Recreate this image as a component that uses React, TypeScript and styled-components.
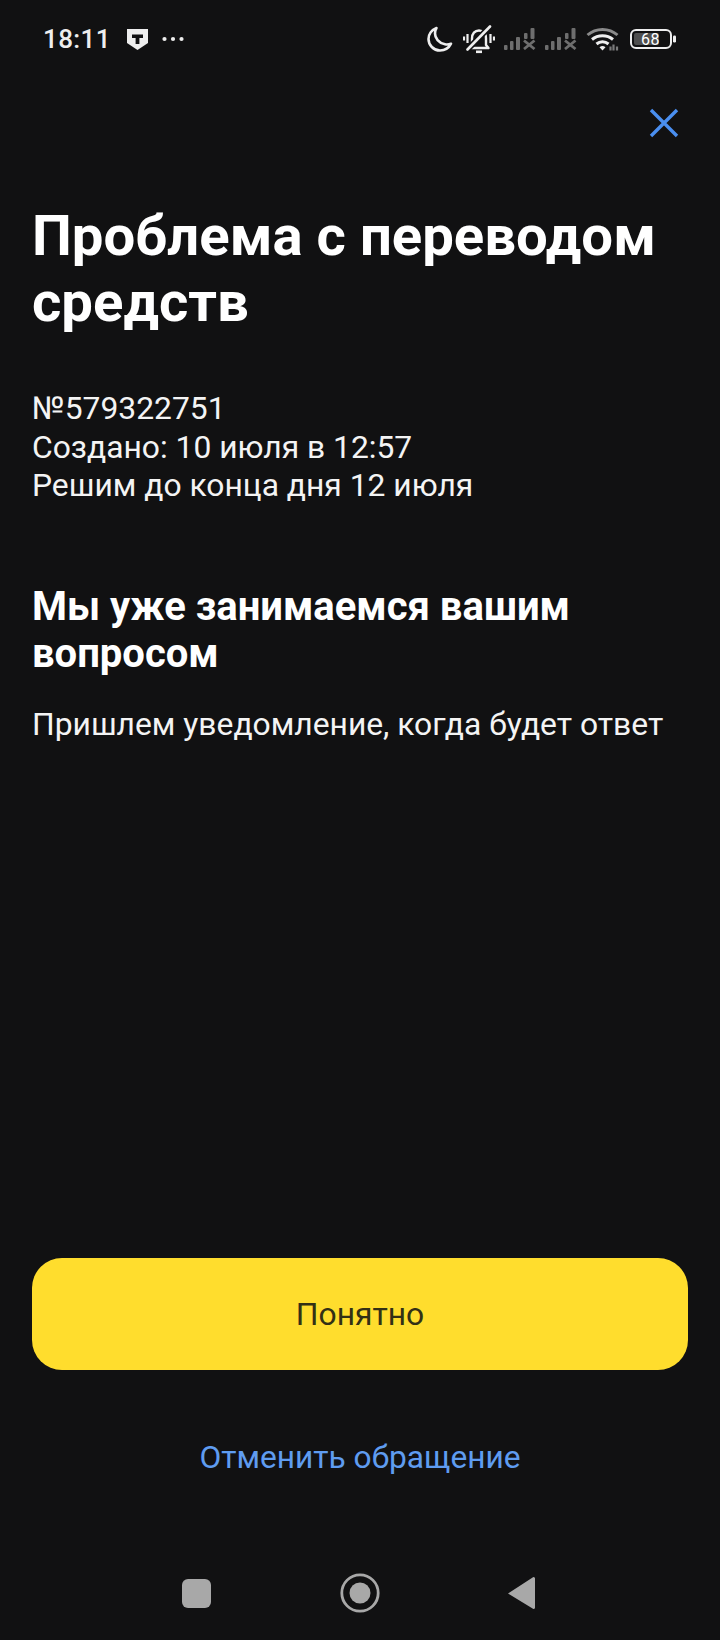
import React from 'react';
import styled, { createGlobalStyle } from 'styled-components';

const GlobalStyle = createGlobalStyle`
	html, body {
		margin: 0;
		padding: 0;
		background: #111112;
	}
`;

const Screen = styled.div`
	width: 720px;
	height: 1640px;
	display: flex;
	flex-direction: column;
	background: #111112;
	color: #fff;
	font-family: Roboto, 'Noto Sans', sans-serif;
	overflow: hidden;
`;

const StatusBar = styled.div`
	height: 78px;
	display: flex;
	align-items: center;
	justify-content: space-between;
	padding: 0 43px 0 43px;
	box-sizing: border-box;
	color: #eee;
`;

const StatusGroup = styled.div`
	display: flex;
	align-items: center;
	gap: ${(p: { $gap: number }) => p.$gap}px;
`;

const Clock = styled.span`
	font-size: 26px;
	font-weight: 500;
	letter-spacing: 0.4px;
	margin-right: 2px;
`;

const CloseRow = styled.div`
	display: flex;
	justify-content: flex-end;
	padding: 30px 41px 0 0;
`;

const Content = styled.div`
	flex: 1;
	padding: 0 32px;
`;

const Title = styled.h1`
	margin: 65px 0 0;
	font-size: 56.3px;
	line-height: 66px;
	font-weight: 700;
`;

const Meta = styled.div`
	margin-top: 54px;
	font-size: 31.8px;
	line-height: 38.6px;
	color: #f4f4f4;
`;

const Subtitle = styled.h2`
	margin: 78px 0 0;
	font-size: 40px;
	line-height: 47px;
	font-weight: 700;
`;

const Note = styled.p`
	margin: 28px 0 0;
	font-size: 31.8px;
	line-height: 39px;
	color: #f4f4f4;
`;

const Footer = styled.div`
	display: flex;
	flex-direction: column;
	align-items: center;
	padding: 0 32px;
`;

const PrimaryButton = styled.button`
	width: 100%;
	height: 112px;
	border: 0;
	border-radius: 30px;
	background: #ffdd2d;
	color: #333015;
	font-family: inherit;
	font-size: 31.8px;
`;

const LinkButton = styled.button`
	margin-top: 68px;
	border: 0;
	padding: 0;
	background: none;
	color: #5f9cf0;
	font-family: inherit;
	font-size: 31.7px;
	line-height: 39px;
`;

const NavBar = styled.div`
	height: 163px;
	box-sizing: border-box;
	display: flex;
	align-items: center;
	justify-content: space-between;
	padding: 96px 185px 27px 182px;
`;

const NavSquare = styled.div`
	width: 29px;
	height: 29px;
	border-radius: 6px;
	background: #a8a8a8;
`;

const ShieldIcon = () => (
	<svg width="21" height="21" viewBox="0 0 21 21">
		<path d="M0 0h21v14l-10.500 7L0 14z" fill="#eee" />
		<path d="M5 5.500h11v3.500h-3.600v6H8.600V9H5z" fill="#111112" />
	</svg>
);

const MoonIcon = () => (
	<svg width="27" height="26" viewBox="0 0 27 26" fill="none">
		<path
			d="M9.500 2C4.500 4 1.500 8.500 1.500 13c0 6 5 11.500 11.500 11.500 4.800 0 9-2.800 11-6.800-2 .8-4 1-6 .6C11.500 17 8 12 8 7.500 8 5.500 8.500 3.500 9.500 2z"
			stroke="#eee"
			strokeWidth="2.600"
			strokeLinejoin="round"
		/>
	</svg>
);

const MutedBellIcon = () => (
	<svg width="32" height="29" viewBox="0 0 32 29" fill="none" stroke="#eee">
		<path d="M9 22V13.500C9 8.500 11.800 5.500 16 5.500s7 3 7 8V20l2.500 3H7" strokeWidth="2.400" strokeLinejoin="round" />
		<path d="M13 26.800h6" strokeWidth="2.600" />
		<path d="M4.500 9v9M1 11.500v4M27.500 9v9M31 11.500v4" strokeWidth="2.200" />
		<path d="M4.500 24.500 27 1.500" stroke="#111112" strokeWidth="6" />
		<path d="M4.500 24.500 27 1.500" strokeWidth="2.600" strokeLinecap="round" />
	</svg>
);

const SignalIcon = () => (
	<svg width="32" height="22" viewBox="0 0 32 22" fill="#6e6e6e">
		<rect x="0" y="17" width="3.500" height="5" rx="1" />
		<rect x="6" y="13" width="3.500" height="9" rx="1" />
		<rect x="12" y="9" width="4" height="13" rx="1" />
		<rect x="20" y="5" width="3.500" height="6" rx="1" />
		<rect x="26.500" y="0" width="4" height="11" rx="1" />
		<path d="M20 12.500l10.500 8.500M30.500 12.500 20 21" stroke="#6e6e6e" strokeWidth="2.800" fill="none" />
	</svg>
);

const WifiIcon = () => (
	<svg width="34" height="24" viewBox="0 0 34 24" fill="none">
		<path d="M1.500 8C10 .5 23 .5 31.500 8" stroke="#8a8a8a" strokeWidth="3" />
		<path d="M6 12.500c6-5 15-5 21 0" stroke="#eee" strokeWidth="3" />
		<path d="M10.500 17c3.500-3 8.500-3 12 0" stroke="#eee" strokeWidth="3" />
		<path d="M13.500 20.200c2-1.500 4-1.500 6 0L16.500 23.500z" fill="#eee" />
		<path d="M24.500 23.500v-4M27.500 23.500v-6M31 23.500v-4" stroke="#7a7a7a" strokeWidth="2.200" />
	</svg>
);

const BatteryIcon = () => (
	<svg width="48" height="20" viewBox="0 0 48 20">
		<rect x="2" y="1" width="40" height="18" rx="5" fill="none" stroke="#eee" strokeWidth="2" />
		<rect x="5" y="4" width="25" height="12" rx="2" fill="#4e4e4e" />
		<rect x="44" y="6.500" width="3" height="7" rx="1.200" fill="#eee" />
		<text x="21.500" y="15.500" fontSize="16" fontWeight="400" fill="#fff" textAnchor="middle" letterSpacing="0.5" fontFamily="Roboto, sans-serif">
			68
		</text>
	</svg>
);

const DotsIcon = () => (
	<svg width="22" height="6" viewBox="0 0 22 6" fill="#eee">
		<circle cx="2.500" cy="3" r="2.100" />
		<circle cx="11" cy="3" r="2.100" />
		<circle cx="19.500" cy="3" r="2.100" />
	</svg>
);

const CloseIcon = () => (
	<svg width="30" height="30" viewBox="0 0 30 30" stroke="#4a8ff0" strokeWidth="3.400">
		<path d="M2 2l26 26M28 2L2 28" />
	</svg>
);

const NavCircleIcon = () => (
	<svg width="40" height="40" viewBox="0 0 40 40">
		<circle cx="20" cy="20" r="18.200" fill="none" stroke="#a8a8a8" strokeWidth="2.800" />
		<circle cx="20" cy="20" r="10.500" fill="#a8a8a8" />
	</svg>
);

const NavBackIcon = () => (
	<svg width="27" height="32" viewBox="0 0 27 32">
		<path d="M0 16.500 25 .3a1.300 1.300 0 0 1 2 1v29.400a1.300 1.300 0 0 1-2 1z" fill="#a8a8a8" />
	</svg>
);

export default function App() {
	return (
		<Screen>
			<GlobalStyle />
			<StatusBar>
				<StatusGroup $gap={14}>
					<Clock>18:11</Clock>
					<ShieldIcon />
					<DotsIcon />
				</StatusGroup>
				<StatusGroup $gap={9}>
					<MoonIcon />
					<MutedBellIcon />
					<SignalIcon />
					<SignalIcon />
					<WifiIcon />
					<BatteryIcon />
				</StatusGroup>
			</StatusBar>
			<CloseRow>
				<CloseIcon />
			</CloseRow>
			<Content>
				<Title>
					Проблема с переводом
					<br />
					средств
				</Title>
				<Meta>
					№579322751
					<br />
					Создано: 10 июля в 12:57
					<br />
					Решим до конца дня 12 июля
				</Meta>
				<Subtitle>
					Мы уже занимаемся вашим
					<br />
					вопросом
				</Subtitle>
				<Note>Пришлем уведомление, когда будет ответ</Note>
			</Content>
			<Footer>
				<PrimaryButton>Понятно</PrimaryButton>
				<LinkButton>Отменить обращение</LinkButton>
			</Footer>
			<NavBar>
				<NavSquare />
				<NavCircleIcon />
				<NavBackIcon />
			</NavBar>
		</Screen>
	);
}
